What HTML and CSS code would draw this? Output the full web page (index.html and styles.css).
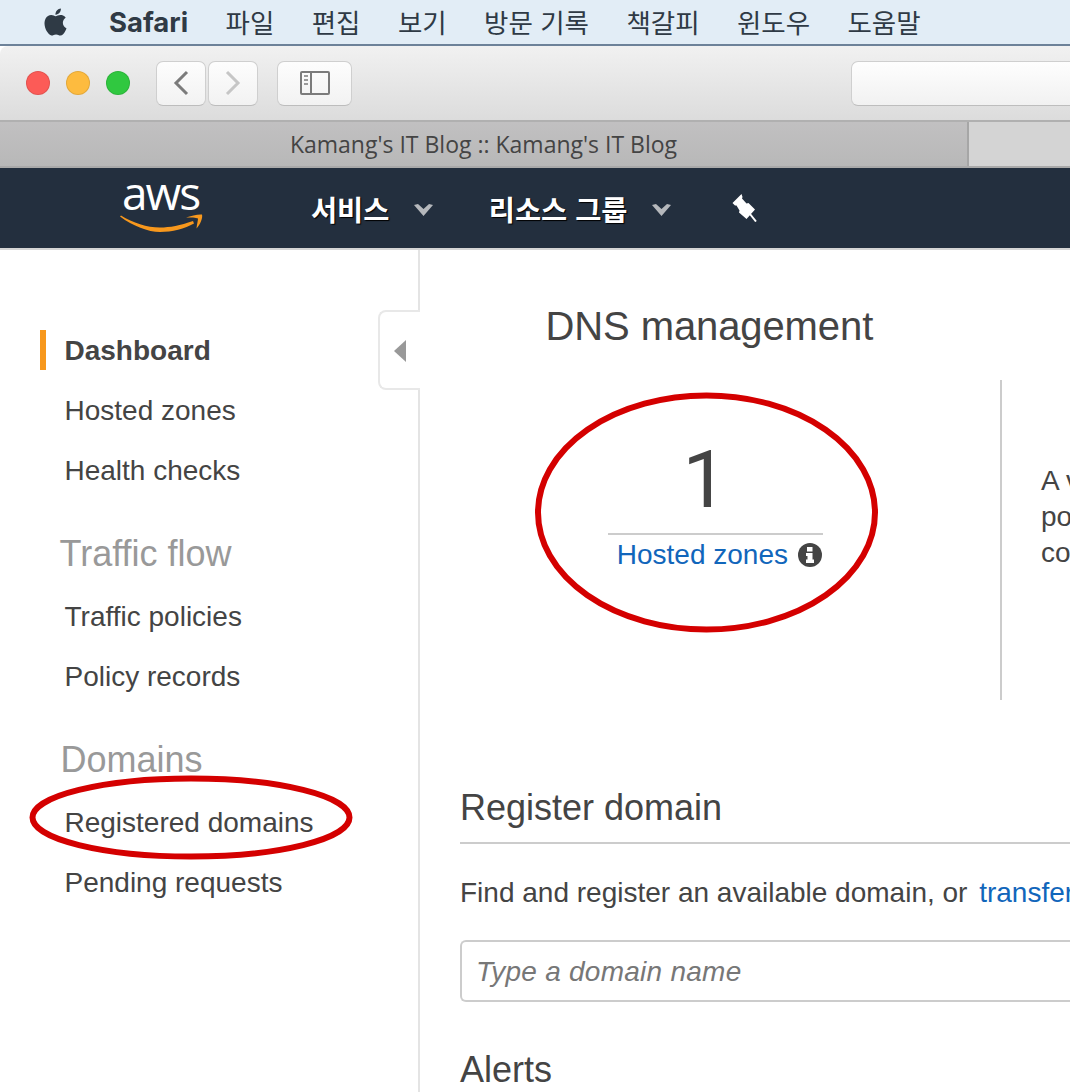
FILE: index.html
```html
<!DOCTYPE html>
<html lang="ko">
<head>
    <meta charset="UTF-8">
    <meta name="viewport" content="width=device-width, initial-scale=1.0">
    <title>Route 53</title>
    <link rel="stylesheet" href="styles.css">
</head>
<body>

<div class="menubar">
    <svg class="apple" viewBox="0 0 24 24"><path d="M12.152 6.896c-.948 0-2.415-1.078-3.96-1.04-2.04.027-3.91 1.183-4.961 3.014-2.117 3.675-.546 9.103 1.519 12.09 1.013 1.454 2.208 3.09 3.792 3.039 1.52-.065 2.09-.987 3.935-.987 1.831 0 2.35.987 3.96.948 1.637-.026 2.676-1.48 3.676-2.948 1.156-1.688 1.636-3.325 1.662-3.415-.039-.013-3.182-1.221-3.22-4.857-.026-3.04 2.48-4.494 2.597-4.559-1.429-2.09-3.623-2.324-4.39-2.376-2-.156-3.675 1.09-4.61 1.09zM15.53 3.83c.843-1.012 1.4-2.427 1.245-3.83-1.207.052-2.662.805-3.532 1.818-.78.896-1.454 2.338-1.273 3.714 1.338.104 2.715-.688 3.559-1.701"/></svg>
    <span class="menu-app">Safari</span>
    <span>파일</span>
    <span>편집</span>
    <span>보기</span>
    <span>방문 기록</span>
    <span>책갈피</span>
    <span>윈도우</span>
    <span>도움말</span>
</div>

<div class="toolbar">
    <div class="lights">
        <span class="light red"></span>
        <span class="light yellow"></span>
        <span class="light green"></span>
    </div>
    <div class="nav-btns">
        <div class="tool-btn arrow-btn">
            <svg width="18" height="26" viewBox="0 0 18 26"><path d="M15 2 L4 13 L15 24" fill="none" stroke="#7b7b7b" stroke-width="3"/></svg>
        </div>
        <div class="tool-btn arrow-btn">
            <svg width="18" height="26" viewBox="0 0 18 26"><path d="M3 2 L14 13 L3 24" fill="none" stroke="#c6c6c6" stroke-width="3"/></svg>
        </div>
    </div>
    <div class="tool-btn sidebar-btn">
        <svg width="30" height="24" viewBox="0 0 30 24">
            <rect x="1" y="1" width="28" height="22" rx="1" fill="none" stroke="#7b7b7b" stroke-width="2"/>
            <path d="M11 1 V23" stroke="#7b7b7b" stroke-width="2"/>
            <path d="M4 5 H8 M4 9 H8 M4 13 H8" stroke="#9a9a9a" stroke-width="2"/>
        </svg>
    </div>
    <div class="address"></div>
</div>

<div class="tabs">
    <div class="tab active">Kamang's IT Blog :: Kamang's IT Blog</div>
    <div class="tab"></div>
</div>

<div class="aws-nav">
    <div class="aws-logo">
        <span class="aws-text">aws</span>
        <svg class="aws-smile" width="83" height="19" viewBox="0 0 83 19">
            <path d="M0 2.5 C13 12 28 18 40 18 C52 18 65 14.500 74 9.500 L73 7 C60 11.500 50 13.500 40 13.500 C27 13.500 13 9 1 1.500 Z" fill="#f7981d"/>
            <path d="M66 3.500 C71 2 78 0 82 0.500 C83 4 80 11 76.500 14.500 C77 10 78 6.500 78 4.500 C76 3.500 71 3.500 66 3.500 Z" fill="#f7981d"/>
        </svg>
    </div>
    <div class="nav-item first">서비스
        <svg class="caret" width="19" height="12" viewBox="0 0 19 12"><path d="M0 1 L4 0 L9.500 5 L15 0 L19 1 L9.500 12 Z" fill="#b5b8bc"/></svg>
    </div>
    <div class="nav-item">리소스 그룹
        <svg class="caret" width="19" height="12" viewBox="0 0 19 12"><path d="M0 1 L4 0 L9.500 5 L15 0 L19 1 L9.500 12 Z" fill="#b5b8bc"/></svg>
    </div>
    <svg class="pin" width="25" height="28" viewBox="0 0 25 28">
        <path d="M9.500 0 L0.500 9 L3 11.500 L4.500 11.500 L7.500 16.500 L7 18.500 L14.500 25 L23 15.500 L16.500 9 L14.500 9.500 L10 4.500 L10.500 3 Z" fill="#fff"/>
        <path d="M18 20 L24 27.500" stroke="#fff" stroke-width="2"/>
    </svg>
</div>

<div class="page">
    <div class="sidebar">
        <a class="side-link current">Dashboard</a>
        <a class="side-link">Hosted zones</a>
        <a class="side-link">Health checks</a>
        <h3 class="side-head">Traffic flow</h3>
        <a class="side-link">Traffic policies</a>
        <a class="side-link">Policy records</a>
        <h3 class="side-head domains">Domains</h3>
        <a class="side-link">Registered domains</a>
        <a class="side-link">Pending requests</a>
        <div class="collapse"><span class="collapse-arrow"></span></div>
    </div>

    <div class="content">
        <h1 class="title">DNS management</h1>
        <div class="stats">
            <div class="stat">
                <div class="stat-num">1</div>
                <div class="stat-label">
                    <a class="link">Hosted zones</a>
                    <svg width="24" height="24" viewBox="0 0 24 24">
                        <circle cx="12" cy="12" r="12" fill="#444"/>
                        <path d="M9 4 H14.500 V8.500 H9 Z M8 10 H14.500 V16.500 H16 V20 H8 V16.500 H9.500 V13 H8 Z" fill="#fff"/>
                    </svg>
                </div>
            </div>
            <div class="stat-text">
                <div>A very</div>
                <div>powerful</div>
                <div>complete</div>
            </div>
        </div>

        <h2 class="section">Register domain</h2>
        <p class="find">Find and register an available domain, or <a class="link transfer">transfer</a></p>
        <div class="domain-input">Type a domain name</div>
        <h2 class="alerts">Alerts</h2>
    </div>

    <!-- red marker circles drawn over the screenshot -->
    <svg class="marks" width="1070" height="842" viewBox="0 0 1070 842">
        <ellipse cx="706.500" cy="262.500" rx="168.500" ry="117" fill="none" stroke="#d40000" stroke-width="6"/>
        <ellipse cx="191" cy="567.500" rx="158.500" ry="39" fill="none" stroke="#d40000" stroke-width="6"/>
    </svg>
</div>

</body>
</html>
```

FILE: styles.css
```css
html, body {
    margin: 0;
    padding: 0;
}
body {
    width: 1070px;
    height: 1092px;
    overflow: hidden;
    background: #fff;
    font-family: "Liberation Sans", Arial, "Noto Sans CJK KR", sans-serif;
    color: #444;
}
h1, h2, h3, p {
    margin: 0;
    font-weight: normal;
}

.menubar {
    height: 44px;
    background: #e2edf6;
    border-bottom: 2px solid #6d8299;
    display: flex;
    align-items: center;
    gap: 37.400px;
    padding-left: 42px;
    font-size: 26.500px;
    line-height: 42px;
    color: #2f3a45;
    font-family: "Noto Sans CJK KR", sans-serif;
}
.apple {
    width: 27px;
    height: 32px;
    fill: #2f3a45;
    margin-right: 2.600px;
}
.menu-app {
    font-family: Inter, sans-serif;
    font-weight: 700;
    font-size: 27.500px;
}

.toolbar {
    height: 74px;
    background: linear-gradient(#f1f1f1, #dcdcdc);
    border-bottom: 2px solid #b0b0b0;
    border-top-left-radius: 8px;
    display: flex;
    align-items: center;
    padding-left: 26px;
    position: relative;
}
.lights {
    display: flex;
    gap: 16px;
    margin-right: 26px;
}
.light {
    width: 22px;
    height: 22px;
    border-radius: 50%;
    border: 1px solid rgba(0, 0, 0, 0.1);
}
.red { background: #fc5b57; }
.yellow { background: #fdbb3f; }
.green { background: #30c840; }

.tool-btn {
    height: 45px;
    background: linear-gradient(#fdfdfd, #f2f2f2);
    border: 1px solid #cfcfcf;
    border-bottom-color: #bdbdbd;
    border-radius: 7px;
    box-sizing: border-box;
    display: flex;
    align-items: center;
    justify-content: center;
}
.nav-btns {
    display: flex;
    gap: 2px;
    margin-right: 19px;
}
.arrow-btn { width: 50px; }
.sidebar-btn { width: 75px; }
.address {
    height: 45px;
    flex: 1;
    margin-left: 499px;
    box-sizing: border-box;
    background: linear-gradient(#fefefe, #f1f1f1);
    border: 1px solid #cfcfcf;
    border-right: none;
    border-bottom-color: #bdbdbd;
    border-radius: 7px 0 0 7px;
}

.tabs {
    height: 44px;
    display: flex;
    border-bottom: 2px solid #a9a9a9;
}
.tab {
    flex: 1;
    background: #d4d4d4;
}
.tab.active {
    flex: none;
    width: 967px;
    background: linear-gradient(#c1c0c1, #b8b8b8);
    border-right: 2px solid #a6a6a6;
    text-align: center;
    line-height: 44px;
    font-size: 23px;
    font-family: "Open Sans", sans-serif;
    color: #444;
}

.aws-nav {
    height: 80px;
    background: #232f3e;
    border-bottom: 2px solid #d5d5d5;
    display: flex;
    align-items: center;
    position: relative;
    color: #fff;
    font-family: "Noto Sans CJK KR", sans-serif;
    font-weight: 700;
    font-size: 28.400px;
}
.aws-logo {
    width: 82px;
    margin-left: 120px;
    margin-right: 109px;
    position: relative;
    height: 60px;
}
.aws-text {
    font-family: "Open Sans", sans-serif;
    font-weight: 400;
    font-size: 46px;
    line-height: 46px;
    letter-spacing: -2px;
    position: absolute;
    left: 2px;
    top: -9px;
}
.aws-smile {
    position: absolute;
    left: 0;
    top: 36px;
}
.nav-item {
    display: flex;
    align-items: center;
    gap: 24.500px;
    margin-right: 58px;
    text-shadow: 1px 1px 1px #000;
}
.nav-item.first { margin-right: 56px; }
.caret { margin-top: 4px; }
.pin { margin-left: 3px; }

.page {
    position: relative;
    display: flex;
    height: 842px;
}
.sidebar {
    width: 418px;
    border-right: 2px solid #e4e4e4;
    padding-top: 71px;
    position: relative;
    flex: none;
}
.side-link {
    display: block;
    height: 60px;
    line-height: 60px;
    padding-left: 64.500px;
    font-size: 28px;
    color: #444;
}
.side-link.current {
    font-weight: 700;
    position: relative;
}
.side-link.current::before {
    content: "";
    position: absolute;
    left: 40px;
    top: 9px;
    width: 6px;
    height: 40px;
    background: #f7981d;
}
.side-head {
    font-size: 36px;
    color: #999;
    padding-left: 59.500px;
    height: 60px;
    line-height: 60px;
    margin: 23px 0 3px;
}
.side-head.domains {
    padding-left: 60.500px;
}
.collapse {
    position: absolute;
    left: 378px;
    top: 60px;
    width: 42px;
    height: 80px;
    box-sizing: border-box;
    background: #fff;
    border: 2px solid #e8e8e8;
    border-right: none;
    border-radius: 8px 0 0 8px;
}
.collapse-arrow {
    position: absolute;
    left: 14px;
    top: 28px;
    width: 0;
    height: 0;
    border-top: 11px solid transparent;
    border-bottom: 11px solid transparent;
    border-right: 12px solid #999;
}

.content {
    flex: 1;
    min-width: 0;
    overflow: hidden;
    padding-left: 40px;
}
.title {
    font-size: 40px;
    line-height: 48px;
    color: #444;
    letter-spacing: -0.1px;
    margin: 52px 0 0 85.500px;
}
.stats {
    display: flex;
    height: 320px;
    margin-top: 30px;
}
.stat {
    width: 215px;
    margin-left: 148px;
    margin-top: 60px;
    flex: none;
}
.stat-num {
    font-family: Roboto, sans-serif;
    font-size: 80px;
    line-height: 80px;
    height: 93px;
    width: 194px;
    padding-right: 21px;
    text-align: center;
    border-bottom: 2px solid #ccc;
}
.stat-label {
    display: flex;
    align-items: center;
    justify-content: flex-end;
    gap: 10px;
    height: 40px;
    margin-right: 1px;
}
.link {
    color: #1166bb;
    font-size: 28px;
}
.stat-text {
    margin-left: 177px;
    border-left: 2px solid #ccc;
    padding: 83px 0 0 39px;
    font-size: 28px;
    line-height: 36px;
    white-space: nowrap;
}
.section {
    font-size: 36px;
    line-height: 44px;
    color: #444;
    margin-top: 86px;
    padding-bottom: 12px;
    border-bottom: 2px solid #ccc;
}
.find {
    font-size: 28px;
    line-height: 36px;
    margin-top: 31px;
    white-space: nowrap;
}
.transfer { margin-left: 4px; }
.domain-input {
    height: 62px;
    box-sizing: border-box;
    margin-top: 29px;
    margin-right: -10px;
    border: 2px solid #ccc;
    border-right: none;
    border-radius: 6px 0 0 6px;
    padding-left: 14px;
    line-height: 60px;
    font-size: 28px;
    letter-spacing: 0.25px;
    font-style: italic;
    color: #777;
}
.alerts {
    font-size: 36px;
    line-height: 44px;
    margin-top: 46px;
}

.marks {
    position: absolute;
    left: 0;
    top: 0;
    pointer-events: none;
}
```
